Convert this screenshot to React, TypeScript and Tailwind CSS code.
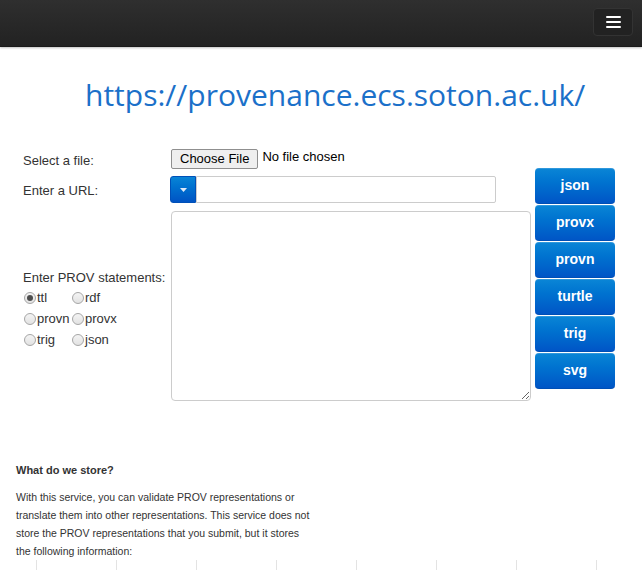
import React from "react";

const formats = ["json", "provx", "provn", "turtle", "trig", "svg"];
const radios: [string, boolean][] = [
  ["ttl", true],
  ["rdf", false],
  ["provn", false],
  ["provx", false],
  ["trig", false],
  ["json", false],
];

function Radio({ label, checked }: { label: string; checked: boolean }) {
  return (
    <div className="flex items-center h-[21px]">
      <span className="w-[12px] h-[12px] rounded-full border border-[#a6a6a6] bg-gradient-to-b from-[#f4f4f4] to-[#e2e2e2] flex items-center justify-center mr-[1px]">
        {checked && <span className="w-[6px] h-[6px] rounded-full bg-[#4d4d4d]" />}
      </span>
      <span className="text-[13px] text-[#333]">{label}</span>
    </div>
  );
}

export default function App() {
  return (
    <div className="w-[642px] h-[570px] overflow-hidden bg-white" style={{ fontFamily: '"Liberation Sans", Arial, sans-serif' }}>
      {/* Navbar */}
      <div className="h-[47px] bg-gradient-to-b from-[#2f2f2f] to-[#222222] border-b border-[#1a1a1a] shadow-[0_1px_2px_rgba(0,0,0,0.25)] flex items-start justify-end pr-[9px] pt-[8px]">
        <button className="w-[40px] h-[28px] rounded-[4px] border border-[#333] bg-[#222] flex flex-col items-center justify-center gap-[3px]">
          <span className="block w-[15px] h-[2px] bg-white rounded-[1px]" />
          <span className="block w-[15px] h-[2px] bg-white rounded-[1px]" />
          <span className="block w-[15px] h-[2px] bg-white rounded-[1px]" />
        </button>
      </div>

      {/* Title */}
      <div className="pl-[85px] pt-[30px]">
        <div className="text-[30px] leading-[36px] text-[#1b70c9]" style={{ fontFamily: '"Open Sans", sans-serif' }}>
          https://provenance.ecs.soton.ac.uk/
        </div>
      </div>

      {/* Form */}
      <div className="flex pl-[23px] mt-[36px]">
        <div className="w-[508px] flex flex-col text-[13px] text-[#333]">
          <div className="flex h-[20px]">
            <div className="w-[148px] pt-[2px]">Select a file:</div>
            <div className="flex items-start">
              <button className="h-[20px] px-[8px] text-[13px] leading-[18px] text-black bg-[#efefef] border border-[#8f8f8f] rounded-[2px]">
                Choose File
              </button>
              <span className="ml-[4px] -mt-[2px] text-[13px] text-black">No file chosen</span>
            </div>
          </div>
          <div className="flex h-[27px] mt-[7px]">
            <div className="w-[147px] flex items-center pt-[3px]">Enter a URL:</div>
            <div className="flex">
              <button className="w-[26px] h-[27px] rounded-l-[3px] bg-gradient-to-b from-[#0a84d6] to-[#0053c4] border border-[#0050b8] flex items-center justify-center">
                <svg width="7" height="4" viewBox="0 0 7 4">
                  <path d="M0 0 L7 0 L3.5 4 Z" fill="#dfe9f7" />
                </svg>
              </button>
              <input className="w-[300px] h-[27px] border border-[#cccccc] rounded-r-[2px] outline-none" />
            </div>
          </div>
          <div className="flex mt-[8px]">
            <div className="w-[148px] pt-[58px]">
              <div className="leading-[18px]">Enter PROV statements:</div>
              <div className="grid grid-cols-[48px_60px] pl-[1px]">
                {radios.map(([l, c]) => (
                  <Radio key={l} label={l} checked={c} />
                ))}
              </div>
            </div>
            <textarea className="w-[360px] h-[190px] border border-[#cccccc] rounded-[4px] outline-none resize" />
          </div>
        </div>
        <div className="ml-[4px] mt-[19px] flex flex-col gap-[1px]">
          {formats.map((f) => (
            <button
              key={f}
              className="w-[80px] h-[36px] rounded-[4px] bg-gradient-to-b from-[#0b86d6] to-[#0055c6] border-b border-[#004fb5] text-white font-bold text-[14px] shadow-[inset_0_1px_0_rgba(255,255,255,0.15)]"
            >
              {f}
            </button>
          ))}
        </div>
      </div>

      {/* Info */}
      <div className="pl-[16px] mt-[61px] w-[314px] text-[#333]">
        <div className="text-[11px] font-bold leading-[16px]">What do we store?</div>
        <p className="mt-[10px] text-[10.5px] leading-[18px]">
          With this service, you can validate PROV representations or translate them into other representations. This service does not store the PROV representations that you submit, but it stores the following information:
        </p>
      </div>
      <div className="flex pl-[36px]">
        {Array.from({ length: 8 }).map((_, i) => (
          <div key={i} className="w-[80px] h-[20px] shrink-0 border-l border-[#e3e3e3]" />
        ))}
      </div>
    </div>
  );
}
